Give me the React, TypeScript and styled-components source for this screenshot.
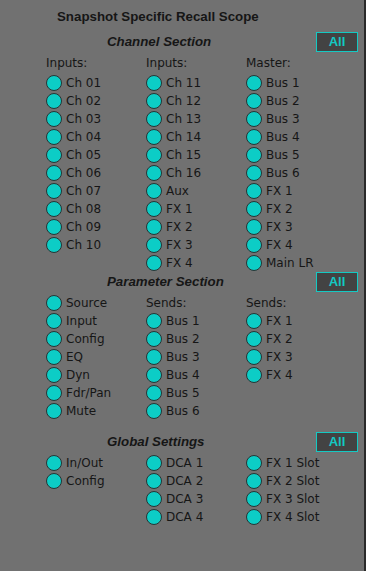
import React from "react";
import styled, { createGlobalStyle } from "styled-components";

const Global = createGlobalStyle`
  html, body, #root { margin: 0; padding: 0; height: 100%; }
  body { background: #717171; }
`;

const Page = styled.div`
  box-sizing: border-box;
  min-height: 100vh;
  width: 366px;
  background: #717171;
  border-right: 2px solid #2a2a2a;
  padding: 7px 6px 0 46px;
  color: #161616;
  font-family: "DejaVu Sans", sans-serif;
`;

const Title = styled.div`
  font-family: "Liberation Sans", Arial, sans-serif;
  font-weight: bold;
  font-size: 13.3px;
  line-height: 20px;
  height: 20px;
  margin: 0 0 5px 11px;
`;

const Section = styled.section<{ $gapTop?: number }>`
  margin-top: ${(p) => p.$gapTop ?? 0}px;
`;

const SectionHeader = styled.div`
  display: flex;
  align-items: center;
  height: 20px;
`;

const SectionTitle = styled.div`
  font-family: "Liberation Sans", Arial, sans-serif;
  font-weight: bold;
  font-style: italic;
  font-size: 13.3px;
  line-height: 20px;
  padding-left: 61px;
`;

const AllButton = styled.button`
  margin-left: auto;
  box-sizing: border-box;
  width: 42px;
  height: 20px;
  background: #434343;
  border: 1.5px solid #14c9c3;
  color: #14c9c3;
  font-family: "Liberation Sans", Arial, sans-serif;
  font-weight: bold;
  font-size: 13px;
  line-height: 16px;
  padding: 0;
  cursor: pointer;
`;

const Columns = styled.div`
  display: grid;
  grid-template-columns: 100px 100px 100px;
  margin-top: 2px;
`;

const Column = styled.div`
  display: flex;
  flex-direction: column;
`;

const ColumnHeader = styled.div<{ $spaced?: boolean }>`
  font-size: 12px;
  line-height: 18px;
  height: 18px;
  margin-bottom: ${(p) => (p.$spaced ? 2 : 0)}px;
  white-space: nowrap;
`;

const Item = styled.label`
  display: flex;
  align-items: center;
  height: 18px;
  gap: 4px;
  font-size: 12px;
  white-space: nowrap;
  cursor: pointer;
`;

const Dot = styled.span`
  box-sizing: border-box;
  width: 16px;
  height: 16px;
  flex: none;
  border-radius: 50%;
  background: #0ccdc6;
  border: 1px solid #263434;
`;

type Col = { header?: string; items: string[] };

const channel: Col[] = [
  { header: "Inputs:", items: ["Ch 01", "Ch 02", "Ch 03", "Ch 04", "Ch 05", "Ch 06", "Ch 07", "Ch 08", "Ch 09", "Ch 10"] },
  { header: "Inputs:", items: ["Ch 11", "Ch 12", "Ch 13", "Ch 14", "Ch 15", "Ch 16", "Aux", "FX 1", "FX 2", "FX 3", "FX 4"] },
  { header: "Master:", items: ["Bus 1", "Bus 2", "Bus 3", "Bus 4", "Bus 5", "Bus 6", "FX 1", "FX 2", "FX 3", "FX 4", "Main LR"] },
];

const param: Col[] = [
  { items: ["Source", "Input", "Config", "EQ", "Dyn", "Fdr/Pan", "Mute"] },
  { header: "Sends:", items: ["Bus 1", "Bus 2", "Bus 3", "Bus 4", "Bus 5", "Bus 6"] },
  { header: "Sends:", items: ["FX 1", "FX 2", "FX 3", "FX 4"] },
];

const globalCols: Col[] = [
  { items: ["In/Out", "Config"] },
  { items: ["DCA 1", "DCA 2", "DCA 3", "DCA 4"] },
  { items: ["FX 1 Slot", "FX 2 Slot", "FX 3 Slot", "FX 4 Slot"] },
];

function Block({ title, cols, spaced, gapTop }: { title: string; cols: Col[]; spaced?: boolean; gapTop?: number }) {
  return (
    <Section $gapTop={gapTop}>
      <SectionHeader>
        <SectionTitle>{title}</SectionTitle>
        <AllButton>All</AllButton>
      </SectionHeader>
      <Columns>
        {cols.map((c, i) => (
          <Column key={i}>
            {c.header && <ColumnHeader $spaced={spaced}>{c.header}</ColumnHeader>}
            {c.items.map((it) => (
              <Item key={it}>
                <Dot />
                {it}
              </Item>
            ))}
          </Column>
        ))}
      </Columns>
    </Section>
  );
}

export default function App() {
  return (
    <>
      <Global />
      <Page>
        <Title>Snapshot Specific Recall Scope</Title>
        <Block title="Channel Section" cols={channel} spaced />
        <Block title="Parameter Section" cols={param} />
        <Block title="Global Settings" cols={globalCols} gapTop={12} />
      </Page>
    </>
  );
}
